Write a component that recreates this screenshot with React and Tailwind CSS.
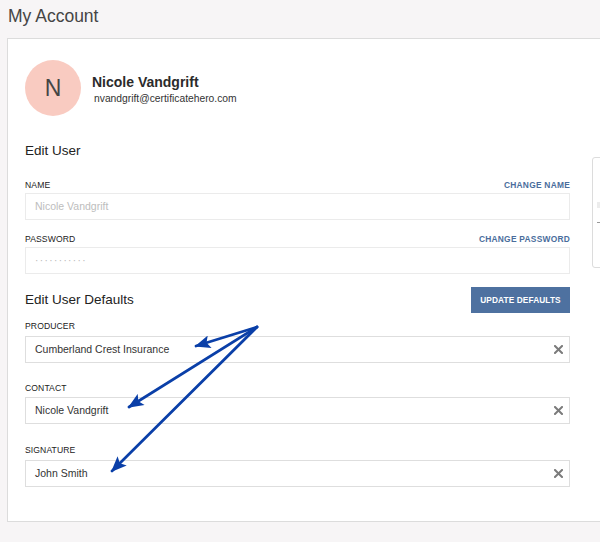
import React from "react";

function Label({ children, right, className = "" }) {
  return (
    <div className={`flex items-center justify-between h-[12px] leading-[12px] ${className}`}>
      <span className="text-[8.6px] text-[#222] tracking-[0.1px]">{children}</span>
      {right && <span className="text-[8.4px] font-bold text-[#4a6d9c] tracking-[0.25px]">{right}</span>}
    </div>
  );
}

function ClearIcon() {
  return (
    <svg width="9" height="9" viewBox="0 0 9 9" className="shrink-0">
      <path d="M1 1 L8 8 M8 1 L1 8" stroke="#7b7b7b" strokeWidth="2" strokeLinecap="square" />
    </svg>
  );
}

function Field({ value, placeholder, clear, dots, className = "", border = "border-[#dedede]" }) {
  return (
    <div className={`h-[27px] bg-white border ${border} flex items-center pl-[9px] pr-[6px] ${className}`}>
      {dots ? (
        <span className="text-[10px] text-[#b8b8b8] tracking-[1.4px]">···········</span>
      ) : value ? (
        <span className="flex-1 text-[10.5px] text-[#333]">{value}</span>
      ) : (
        <span className="flex-1 text-[10.5px] text-[#bdbdbd]">{placeholder}</span>
      )}
      {clear && <ClearIcon />}
    </div>
  );
}

export default function App() {
  return (
    <div className="relative w-[600px] h-[542px] overflow-hidden bg-[#f7f5f6] font-['Liberation_Sans',Arial,sans-serif]">
      <h1 className="pl-[8px] pt-[4px] text-[17.5px] leading-[24px] text-[#454545]">My Account</h1>

      <div className="ml-[7px] mt-[10px] w-[720px] h-[484px] bg-white border border-[#dcdcdc] flex pt-[21px] pl-[17px]">
        <div className="w-[545px] shrink-0">
          <div className="flex items-start">
            <div className="w-[56px] h-[56px] rounded-full bg-[#f9cbc1] flex items-center justify-center text-[23px] text-[#454545]">
              N
            </div>
            <div className="ml-[11px] mt-[14px]">
              <div className="text-[14px] leading-[16px] font-bold text-[#2b2b2b]">Nicole Vandgrift</div>
              <div className="mt-[2px] ml-[2px] text-[10.3px] leading-[14px] text-[#333]">nvandgrift@certificatehero.com</div>
            </div>
          </div>

          <h2 className="mt-[27px] text-[13.5px] leading-[16px] text-[#222]">Edit User</h2>

          <Label right="CHANGE NAME" className="mt-[20px]">NAME</Label>
          <Field placeholder="Nicole Vandgrift" className="mt-[2px]" border="border-[#ebebeb]" />

          <Label right="CHANGE PASSWORD" className="mt-[13px]">PASSWORD</Label>
          <Field dots className="mt-[2px]" border="border-[#ebebeb]" />

          <div className="mt-[13px] flex items-center justify-between">
            <h2 className="text-[13.5px] leading-[16px] text-[#222]">Edit User Defaults</h2>
            <button className="h-[26px] w-[99px] bg-[#4e71a0] text-white text-[8.3px] font-bold tracking-[0.1px]">
              UPDATE DEFAULTS
            </button>
          </div>

          <Label className="mt-[7px]">PRODUCER</Label>
          <Field value="Cumberland Crest Insurance" clear className="mt-[4px]" />

          <Label className="mt-[19px]">CONTACT</Label>
          <Field value="Nicole Vandgrift" clear className="mt-[3px]" />

          <Label className="mt-[20px]">SIGNATURE</Label>
          <Field value="John Smith" clear className="mt-[4px]" />
        </div>

        <div className="ml-[22px] mt-[97px] w-[120px] h-[111px] rounded-[3px] border border-[#dcdcdc] bg-white pt-[44px] pl-[4px]">
          <div className="w-[6px] h-[6px] bg-[#ececec]"></div>
          <div className="mt-[14px] w-[4px] h-[1px] bg-[#999]"></div>
        </div>
      </div>

      <svg className="absolute inset-0 pointer-events-none" width="600" height="542" viewBox="0 0 600 542">
        <defs>
          <marker id="head" viewBox="0 0 12 10" refX="11" refY="5" markerWidth="16" markerHeight="13" markerUnits="userSpaceOnUse" orient="auto">
            <path d="M0 0 L12 5 L0 10 L2.5 5 Z" fill="#0a3fa8" />
          </marker>
        </defs>
        <g stroke="#0a3fa8" strokeWidth="2.7" strokeLinecap="round" fill="none">
          <line x1="257" y1="327" x2="196" y2="346" markerEnd="url(#head)" />
          <line x1="257" y1="327" x2="129" y2="407" markerEnd="url(#head)" />
          <line x1="257" y1="327" x2="112" y2="471" markerEnd="url(#head)" />
        </g>
      </svg>
    </div>
  );
}
